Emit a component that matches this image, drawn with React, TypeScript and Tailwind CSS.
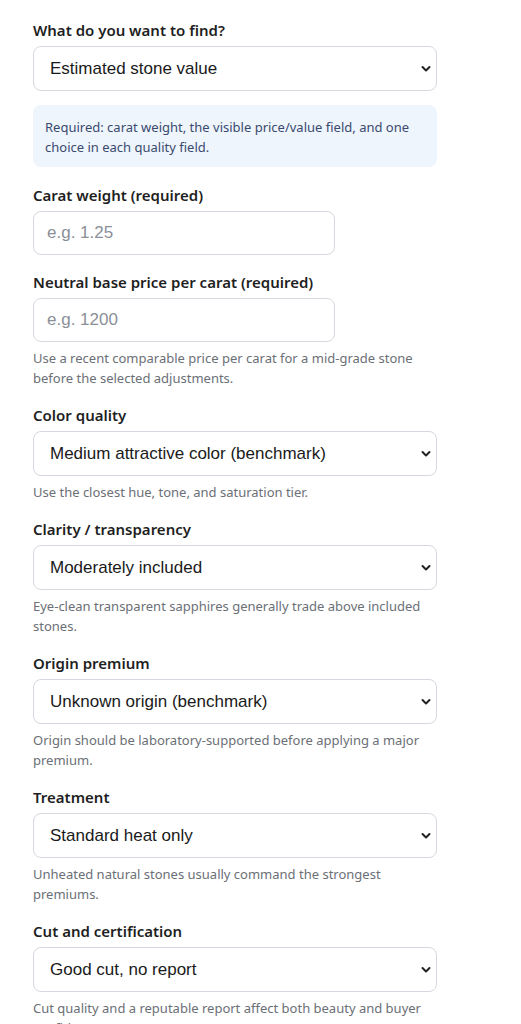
import type { ReactNode } from "react";

const uiFont = { fontFamily: '"Noto Sans", "Open Sans", sans-serif' };

function Chevron() {
  return (
    <svg
      width="10"
      height="7"
      viewBox="0 0 10 7"
      className="pointer-events-none absolute right-[6px] top-1/2 -translate-y-1/2"
    >
      <path d="M1.5 1.5 L5 5 L8.5 1.5" fill="none" stroke="#222" strokeWidth="2" strokeLinecap="round" strokeLinejoin="round" />
    </svg>
  );
}

function Select({ value, options }: { value: string; options: string[] }) {
  return (
    <div className="relative w-[404px]">
      <select
        defaultValue={value}
        className="h-[45px] w-full appearance-none rounded-lg border border-[#d5d8de] bg-white pl-4 pr-8 font-['Liberation_Sans',Arial,sans-serif] text-[17px] text-[#1a1a1a] outline-none"
      >
        {options.map((o) => (
          <option key={o}>{o}</option>
        ))}
      </select>
      <Chevron />
    </div>
  );
}

function Input({ placeholder }: { placeholder: string }) {
  return (
    <input
      type="text"
      placeholder={placeholder}
      className="h-[44px] w-[302px] rounded-lg border border-[#d5d8de] bg-white px-[13px] font-['Liberation_Sans',Arial,sans-serif] text-[17px] text-[#1a1a1a] outline-none placeholder:text-[#8a8f98]"
    />
  );
}

function Field({
  label,
  help,
  children,
}: {
  label: string;
  help?: string;
  children: ReactNode;
}) {
  return (
    <div className="mb-[17px] flex flex-col">
      <label className="mb-1.5 text-[15px] font-semibold leading-5 text-[#1f1f1f]">
        {label}
      </label>
      {children}
      {help ? (
        <p className="mt-1.5 w-[404px] text-[13px] leading-5 text-[#6b6f76]">{help}</p>
      ) : null}
    </div>
  );
}

export default function App() {
  return (
    <div className="min-h-screen bg-white pl-[33px] pt-5" style={uiFont}>
      <div className="flex w-[404px] flex-col">
        <div className="flex flex-col">
          <label className="mb-1.5 text-[15px] font-semibold leading-5 text-[#1f1f1f]">
            What do you want to find?
          </label>
          <Select
            value="Estimated stone value"
            options={["Estimated stone value", "Required base price per carat", "Price per carat"]}
          />
        </div>
        <div className="mb-[18px] mt-[14px] rounded-lg bg-[#eef5fd] px-3 pb-[10px] pt-3 text-[13px] leading-5 text-[#3a4a6e]">
          Required: carat weight, the visible price/value field, and one choice in each quality field.
        </div>

        <Field label="Carat weight (required)">
          <Input placeholder="e.g. 1.25" />
        </Field>

        <Field
          label="Neutral base price per carat (required)"
          help="Use a recent comparable price per carat for a mid-grade stone before the selected adjustments."
        >
          <Input placeholder="e.g. 1200" />
        </Field>

        <Field label="Color quality" help="Use the closest hue, tone, and saturation tier.">
          <Select
            value="Medium attractive color (benchmark)"
            options={["Top vivid color", "Medium attractive color (benchmark)", "Light or dark color"]}
          />
        </Field>

        <Field
          label="Clarity / transparency"
          help="Eye-clean transparent sapphires generally trade above included stones."
        >
          <Select
            value="Moderately included"
            options={["Eye-clean", "Moderately included", "Heavily included"]}
          />
        </Field>

        <Field
          label="Origin premium"
          help="Origin should be laboratory-supported before applying a major premium."
        >
          <Select
            value="Unknown origin (benchmark)"
            options={["Kashmir", "Burma", "Unknown origin (benchmark)"]}
          />
        </Field>

        <Field
          label="Treatment"
          help="Unheated natural stones usually command the strongest premiums."
        >
          <Select
            value="Standard heat only"
            options={["Unheated", "Standard heat only", "Diffusion or filled"]}
          />
        </Field>

        <Field
          label="Cut and certification"
          help="Cut quality and a reputable report affect both beauty and buyer confidence."
        >
          <Select
            value="Good cut, no report"
            options={["Excellent cut, lab report", "Good cut, no report", "Poor cut"]}
          />
        </Field>
      </div>
    </div>
  );
}
